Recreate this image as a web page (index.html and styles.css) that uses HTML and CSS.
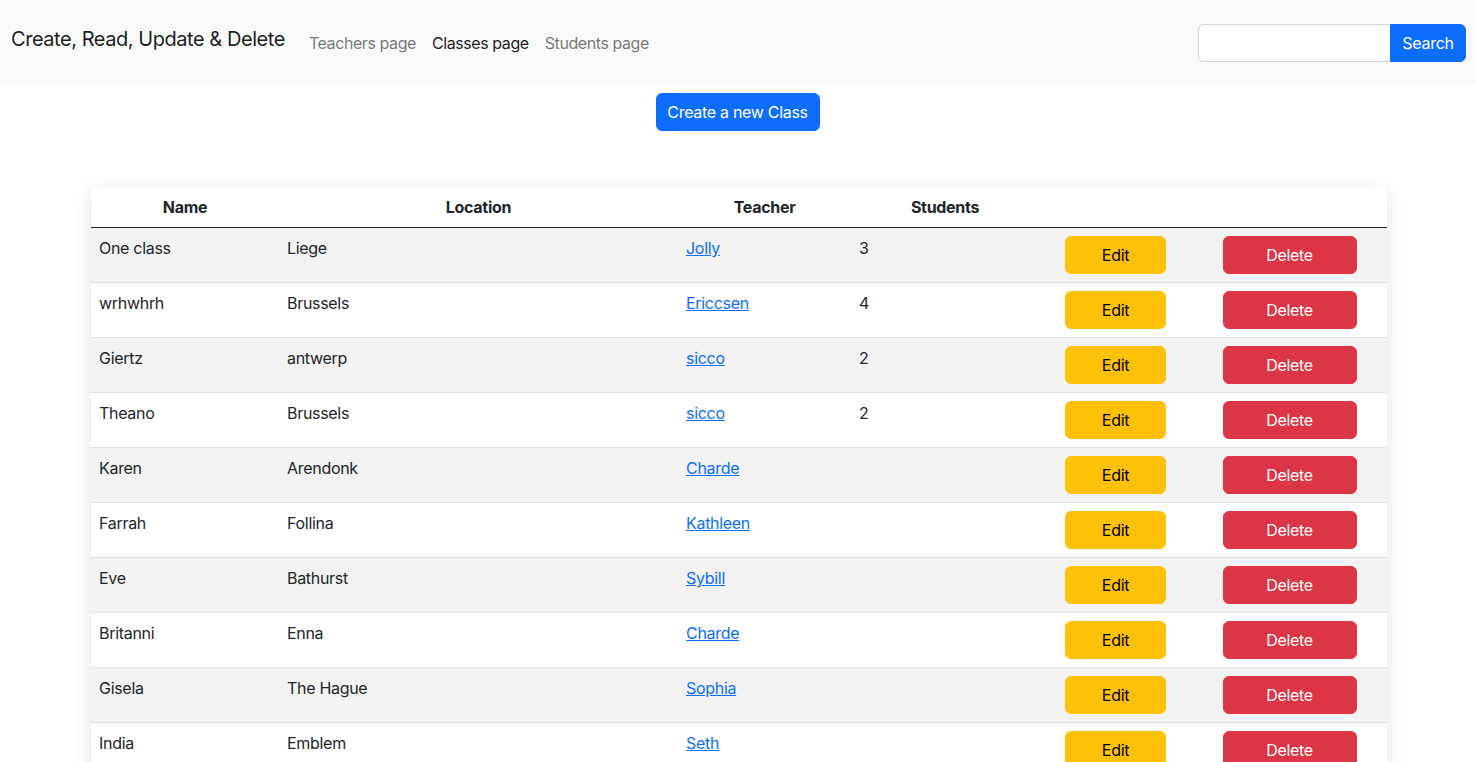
FILE: index.html
```html
<!DOCTYPE html>
<html>
<head>
<meta charset="utf-8">
<link rel="stylesheet" href="styles.css">
</head>
<body>
<nav class="navbar">
  <div class="nav-left">
    <span class="brand">Create, Read, Update &amp; Delete</span>
    <a class="nav-link">Teachers page</a>
    <a class="nav-link active">Classes page</a>
    <a class="nav-link">Students page</a>
  </div>
  <form class="search">
    <input class="search-input" type="text">
    <button class="btn btn-primary search-btn" type="button">Search</button>
  </form>
</nav>
<div class="create-wrap">
  <button class="btn btn-primary create-btn" type="button">Create a new Class</button>
</div>
<div class="table-wrap">
<table class="table">
  <colgroup>
    <col class="c-name"><col class="c-loc"><col class="c-teach"><col class="c-stud"><col class="c-edit"><col class="c-del">
  </colgroup>
  <thead>
    <tr><th>Name</th><th>Location</th><th>Teacher</th><th>Students</th><th></th><th></th></tr>
  </thead>
  <tbody>
    <tr><td>One class</td><td>Liege</td><td><a href="#">Jolly</a></td><td>3</td><td class="act"><button class="btn btn-edit">Edit</button></td><td class="act"><button class="btn btn-del">Delete</button></td></tr>
    <tr><td>wrhwhrh</td><td>Brussels</td><td><a href="#">Ericcsen</a></td><td>4</td><td class="act"><button class="btn btn-edit">Edit</button></td><td class="act"><button class="btn btn-del">Delete</button></td></tr>
    <tr><td>Giertz</td><td>antwerp</td><td><a href="#">sicco</a></td><td>2</td><td class="act"><button class="btn btn-edit">Edit</button></td><td class="act"><button class="btn btn-del">Delete</button></td></tr>
    <tr><td>Theano</td><td>Brussels</td><td><a href="#">sicco</a></td><td>2</td><td class="act"><button class="btn btn-edit">Edit</button></td><td class="act"><button class="btn btn-del">Delete</button></td></tr>
    <tr><td>Karen</td><td>Arendonk</td><td><a href="#">Charde</a></td><td></td><td class="act"><button class="btn btn-edit">Edit</button></td><td class="act"><button class="btn btn-del">Delete</button></td></tr>
    <tr><td>Farrah</td><td>Follina</td><td><a href="#">Kathleen</a></td><td></td><td class="act"><button class="btn btn-edit">Edit</button></td><td class="act"><button class="btn btn-del">Delete</button></td></tr>
    <tr><td>Eve</td><td>Bathurst</td><td><a href="#">Sybill</a></td><td></td><td class="act"><button class="btn btn-edit">Edit</button></td><td class="act"><button class="btn btn-del">Delete</button></td></tr>
    <tr><td>Britanni</td><td>Enna</td><td><a href="#">Charde</a></td><td></td><td class="act"><button class="btn btn-edit">Edit</button></td><td class="act"><button class="btn btn-del">Delete</button></td></tr>
    <tr><td>Gisela</td><td>The Hague</td><td><a href="#">Sophia</a></td><td></td><td class="act"><button class="btn btn-edit">Edit</button></td><td class="act"><button class="btn btn-del">Delete</button></td></tr>
    <tr><td>India</td><td>Emblem</td><td><a href="#">Seth</a></td><td></td><td class="act"><button class="btn btn-edit">Edit</button></td><td class="act"><button class="btn btn-del">Delete</button></td></tr>
  </tbody>
</table>
</div>
</body>
</html>
```
FILE: styles.css
```css
* { box-sizing: border-box; }
html, body { margin: 0; padding: 0; }
body {
  font-family: Inter, "Liberation Sans", sans-serif;
  font-size: 16px;
  line-height: 24px;
  color: #212529;
  background: #fff;
  overflow: hidden;
  letter-spacing: -0.3px;
}
.navbar {
  height: 85px;
  background: #f8f9fa;
  display: flex;
  align-items: center;
  justify-content: space-between;
  padding: 0 9px 0 11px;
}
.nav-left { display: flex; align-items: center; }
.brand {
  font-size: 20px;
  line-height: 30px;
  color: rgba(0,0,0,.9);
  margin-right: 16px;
  margin-top: -8px;
  letter-spacing: -0.45px;
}
.nav-link {
  color: rgba(0,0,0,.55);
  padding: 0 8px;
  letter-spacing: -0.42px;
}
.nav-link.active { color: rgba(0,0,0,.9); }
.search { display: flex; }
.search-input {
  width: 192px;
  height: 38px;
  border: 1px solid #ced4da;
  border-right: none;
  border-radius: 6px 0 0 6px;
  background: #fff;
  font: inherit;
  outline: none;
}
.btn {
  font: inherit;
  letter-spacing: inherit;
  border: 1px solid transparent;
  border-radius: 6px;
  height: 38px;
  cursor: pointer;
  padding: 0 12px;
}
.btn-primary { background: #0d6efd; color: #fff; border-color: #0d6efd; }
.search-btn { border-radius: 0 6px 6px 0; width: 76px; padding: 0; }
.create-wrap {
  display: flex;
  justify-content: center;
  padding-top: 8px;
}
.create-btn { width: 164px; padding: 0; }
.table-wrap {
  margin: 56px 88px 0 91px;
  box-shadow: 0 4px 16px rgba(0,0,0,.12);
}
.table {
  width: 100%;
  border-collapse: collapse;
  table-layout: fixed;
}
.c-name { width: 188px; }
.c-loc { width: 399px; }
.c-teach { width: 173px; }
.c-stud { width: 188px; }
.c-edit { width: 153px; }
.c-del { width: 195px; }
th {
  font-weight: 700;
  text-align: center;
  padding: 8px;
  height: 40px;
  border-bottom: 1px solid #212529;
}
td {
  padding: 8px;
  vertical-align: top;
  border-bottom: 1px solid #dee2e6;
  height: 55px;
}
tbody tr:nth-child(odd) td { background: #f2f2f2; }
td.act { text-align: center; }
td a { color: #0d6efd; text-decoration: underline; }
.btn-edit { background: #ffc107; border-color: #ffc107; color: #000; width: 101px; padding: 0; }
.btn-del { background: #dc3545; border-color: #dc3545; color: #fff; width: 134px; padding: 0; }
```
